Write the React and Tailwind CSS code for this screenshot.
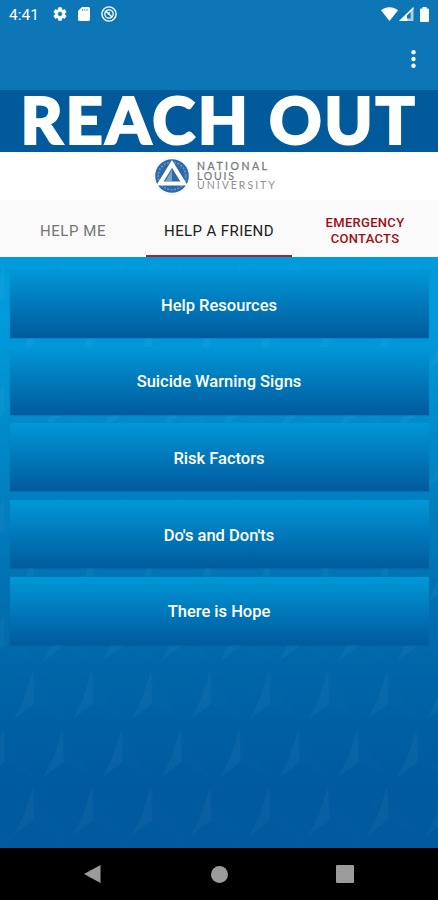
import React from "react";

const topics = [
  "Help Resources",
  "Suicide Warning Signs",
  "Risk Factors",
  "Do's and Don'ts",
  "There is Hope",
];

const StatusBar = () => (
  <div className="flex h-7 items-center pl-[9px] pr-[8px] text-white">
    <span className="w-[43px] pt-[3px] text-[15.5px] leading-none">4:41</span>
    <svg className="h-4 w-4" viewBox="0 0 24 24" fill="currentColor">
      <path
        stroke="white"
        strokeWidth="0.8"
        d="M19.14 12.94c.04-.3.06-.61.06-.94 0-.32-.02-.64-.07-.94l2.03-1.58a.49.49 0 0 0 .12-.61l-1.92-3.32a.488.488 0 0 0-.59-.22l-2.39.96c-.5-.38-1.03-.7-1.62-.94l-.36-2.54a.484.484 0 0 0-.48-.41h-3.84c-.24 0-.43.17-.47.41l-.36 2.54c-.59.24-1.13.57-1.62.94l-2.39-.96c-.22-.08-.47 0-.59.22L2.74 8.87c-.12.21-.08.47.12.61l2.03 1.58c-.05.3-.09.63-.09.94s.02.64.07.94l-2.03 1.58a.49.49 0 0 0-.12.61l1.92 3.32c.12.22.37.29.59.22l2.39-.96c.5.38 1.03.7 1.62.94l.36 2.54c.05.24.24.41.48.41h3.84c.24 0 .44-.17.47-.41l.36-2.54c.59-.24 1.13-.56 1.62-.94l2.39.96c.22.08.47 0 .59-.22l1.92-3.32c.12-.22.07-.47-.12-.61l-2.01-1.58zM12 15.6A3.6 3.6 0 1 1 12 8.4a3.6 3.6 0 0 1 0 7.2z"
      />
    </svg>
    <svg className="ml-[10px] h-[14px] w-3" viewBox="0 0 12 14" fill="none">
      <path d="M4 0h6.500A1.500 1.500 0 0 1 12 1.500v11a1.500 1.500 0 0 1-1.500 1.500h-9A1.500 1.500 0 0 1 0 12.500V4z" fill="white" />
      <path d="M4.500 2v1.800M6.800 2v1.800M9.100 2v1.800" stroke="#0d76b6" strokeOpacity="0.7" strokeWidth="1.100" />
    </svg>
    <svg className="ml-[11px] h-4 w-4" viewBox="0 0 16 16" fill="none" stroke="white">
      <circle cx="8" cy="8" r="7.100" strokeWidth="1.400" />
      <circle cx="8" cy="8" r="4.200" strokeWidth="1.300" />
      <path d="M4.900 5.200l6.200 5.800" strokeWidth="1.600" />
      <path d="M7 8.300L8.700 6.200" strokeWidth="1.100" />
    </svg>
    <div className="ml-auto flex items-center">
      <svg className="h-[14px] w-[17px]" viewBox="0 0 17 14">
        <path d="M0 3.200C4.900-.9 12.100-.9 17 3.200L8.500 14z" fill="white" />
      </svg>
      <svg className="ml-[1px] h-[14px] w-[15px]" viewBox="0 0 15 14">
        <path d="M14.500 0v14H0z" fill="white" fillOpacity="0.65" />
        <path d="M14.500 0L0 14h8.500V8L14.500 2z" fill="white" />
        <path d="M8 8.500l3.600-3.600v6.600H8z" fill="#0d76b6" />
      </svg>
      <svg className="ml-[6px] mr-[1px] h-[15px] w-[9px]" viewBox="0 0 9 15">
        <path d="M2.500 0h4v1.500H8a1 1 0 0 1 1 1V14a1 1 0 0 1-1 1H1a1 1 0 0 1-1-1V2.500a1 1 0 0 1 1-1h1.500z" fill="white" />
      </svg>
    </div>
  </div>
);

const Toolbar = () => (
  <div className="flex h-[62px] items-center justify-end pr-[22px]">
    <svg className="h-[19px] w-[5px]" viewBox="0 0 5 19" fill="white">
      <circle cx="2.500" cy="2.300" r="2.200" />
      <circle cx="2.500" cy="9" r="2.200" />
      <circle cx="2.500" cy="15.700" r="2.200" />
    </svg>
  </div>
);

const Seal = () => (
  <svg className="h-[38px] w-[38px]" viewBox="0 0 38 38">
    <circle cx="19" cy="19" r="18.300" fill="white" stroke="#dfe8f2" strokeWidth="0.600" />
    <circle cx="19" cy="19" r="16.800" fill="#2d69a9" />
    <circle cx="19" cy="19" r="13.800" fill="none" stroke="#8fb2d5" strokeOpacity="0.6" strokeWidth="1.800" strokeDasharray="2 1.500" />
    <path d="M19 7L31 26.500H7z" fill="#2d69a9" stroke="white" strokeWidth="4.200" />
    <path d="M19 12.500V24h-6.500z" fill="#7ba2cc" />
  </svg>
);

const Tabs = () => (
  <div className="grid h-[57px] grid-cols-3 bg-[#fafafa] text-center">
    <div className="flex items-center justify-center pt-[5px] text-[15px] tracking-[0.55px] text-[#757575]">
      HELP ME
    </div>
    <div className="flex items-center justify-center border-b-2 border-[#a32035] pt-[7px] text-[15px] tracking-[0.4px] text-[#202020]">
      HELP A FRIEND
    </div>
    <div className="flex items-center justify-center pt-[5px] text-[13px] font-medium leading-4 tracking-[0.3px] text-[#a30d12]">
      EMERGENCY
      <br />
      CONTACTS
    </div>
  </div>
);

// faceted tiles, faded over the blue gradient
const Facets = () => (
  <svg className="absolute inset-0 h-full w-full" viewBox="0 0 438 591">
    <defs>
      <pattern id="facets" width="59" height="116" patternUnits="userSpaceOnUse" x="8" y="66">
        <g id="facet" fill="white">
          <path d="M25 0L26 33L6 48L16 28z" fillOpacity="0.035" />
          <path d="M25 1L31 19L57 49L26 33z" fillOpacity="0.008" />
        </g>
        <use href="#facet" x="29.500" y="58" />
        <use href="#facet" x="-29.500" y="58" />
      </pattern>
    </defs>
    <rect width="438" height="591" fill="url(#facets)" />
  </svg>
);

const NavBar = () => (
  <div className="flex h-[52px] items-center justify-between bg-black px-[84px]">
    <svg className="h-[18px] w-[17px]" viewBox="0 0 17 18">
      <path d="M16.500 0v18L0 9z" fill="#9b9b9b" />
    </svg>
    <div className="ml-px h-[17px] w-[17px] rounded-full bg-[#9b9b9b]" />
    <div className="h-[18px] w-[18px] rounded-[1px] bg-[#9b9b9b]" />
  </div>
);

const App = () => {
  return (
    <div className="flex h-[900px] w-[438px] flex-col overflow-hidden bg-[#0d76b6] font-['Roboto',sans-serif]">
      <StatusBar />
      <Toolbar />

      <h1 className="flex h-[62px] items-center justify-center whitespace-nowrap bg-[#005a9c] pb-1 font-['Lato',sans-serif] text-[65px] font-black leading-none tracking-[2.7px] text-white [-webkit-text-stroke:2px_white]">
        REACH OUT
      </h1>

      <div className="flex h-[48px] items-center bg-white pl-[153px]">
        <Seal />
        <div className="ml-[6px] pt-px font-['Lato',sans-serif] text-[10.5px] leading-[9.5px] text-[#777b80]">
          <div className="tracking-[2.5px] [-webkit-text-stroke:0.3px_#777b80]">NATIONAL</div>
          <div className="tracking-[1.8px] [-webkit-text-stroke:0.2px_#777b80]">LOUIS</div>
          <div className="tracking-[2px] text-[#8b8f94]">UNIVERSITY</div>
        </div>
      </div>

      <Tabs />

      <div className="relative flex-1 bg-[linear-gradient(to_bottom,#009bdc_0px,#0098d8_85px,#008bcb_165px,#0080c0_238px,#0074b5_315px,#0069ab_392px,#0061a5_455px,#005a9f_530px,#005a9d_591px)]">
        <Facets />
        <div className="relative flex flex-col gap-[8.7px] px-[9.5px] pt-[13px]">
          {topics.map((topic) => (
            <button
              key={topic}
              className="h-[68px] w-full bg-linear-to-b from-[#0098d8] to-[#005b9e] pt-[4px] text-[16.5px] font-medium text-white shadow-[0_1px_1px_rgba(0,50,100,0.15)]"
            >
              {topic}
            </button>
          ))}
        </div>
      </div>

      <NavBar />
    </div>
  );
};

export default App;
